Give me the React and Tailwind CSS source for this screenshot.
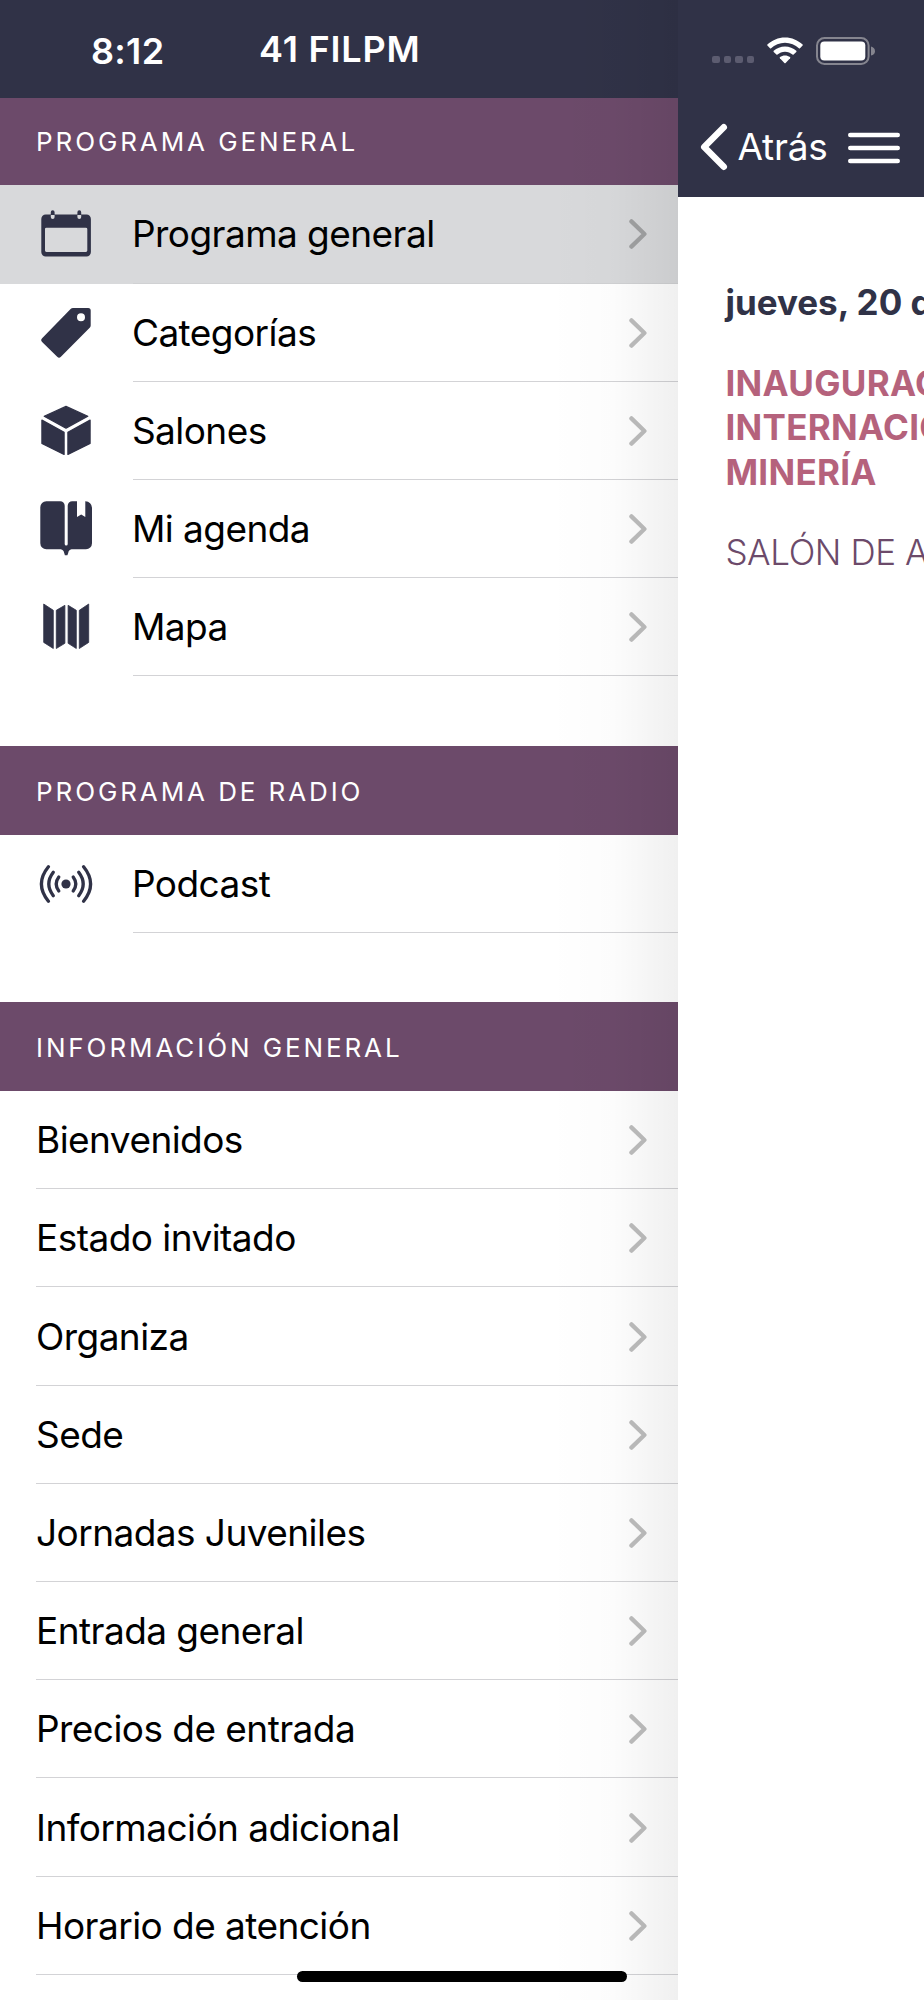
import React from 'react';
import clsx from 'clsx';

const CalendarIcon = () => (
  <path
    fillRule="evenodd"
    d="M10.8 6.5V4.2a1.9 1.9 0 0 1 3.8 0V6.5H37.4V4.2a1.9 1.9 0 0 1 3.8 0V6.5H46.5a4.4 4.4 0 0 1 4.4 4.4V44.1a4.4 4.4 0 0 1-4.4 4.4H5.7a4.4 4.4 0 0 1-4.4-4.4V10.9a4.4 4.4 0 0 1 4.4-4.4ZM6.4 19.7a1.4 1.4 0 0 0-1.4 1.4V42.6A1.4 1.4 0 0 0 6.4 44H45.9a1.4 1.4 0 0 0 1.4-1.4V21.1a1.4 1.4 0 0 0-1.4-1.4ZM10.8 7V9a1.9 1.9 0 0 0 3.8 0V7ZM37.4 7V9a1.9 1.9 0 0 0 3.8 0V7Z"
  />
);

const TagIcon = () => (
  <path
    fillRule="evenodd"
    d="M33 1H48.2a2.5 2.5 0 0 1 2.5 2.5V18.4a3.4 3.4 0 0 1-1 2.4L20.9 49.7a2.6 2.6 0 0 1-3.7 0L2.1 35a2.6 2.6 0 0 1 0-3.7L30.6 2a3.4 3.4 0 0 1 2.4-1ZM41 6.3a4 4 0 1 0 0 8 4 4 0 0 0 0-8Z"
  />
);

const CubeIcon = () => (
  <g strokeWidth="1.2" strokeLinejoin="round" stroke="currentColor">
    <path d="M26 1.4 47.8 11.2 26 23.1 4.2 11.2Z" />
    <path d="M1.9 15.1 24.1 27.3V49.4L1.9 38.4Z" />
    <path d="M50.1 15.1 27.9 27.3V49.4L50.1 38.4Z" />
  </g>
);

const AgendaIcon = () => (
  <path d="M6.3-1.7H20.2A4.5 4.5 0 0 1 24.7 2.8V41a1.5 1.5 0 0 0 3 0V2.8A4.5 4.5 0 0 1 32.2-1.7H37V14L41.2 11.4 45.3 14V-1.7A6.5 6.5 0 0 1 52 5V40.3A6 6 0 0 1 46 46.3H31.5Q28.6 46.8 28.2 50L27.4 52.3H24.9L24.2 50Q23.6 46.8 20.8 46.3H6.3A6 6 0 0 1 .3 40.3V4.3A6 6 0 0 1 6.3-1.7Z" />
);

const MapIcon = () => (
  <g strokeWidth="0.8" strokeLinejoin="round" stroke="currentColor">
    <path d="M3.7 3 13.3 9.3V47.5L3.7 41.4Z" />
    <path d="M16.3 9.3 24.9 4.3V42.3L16.3 47.5Z" />
    <path d="M28.1 4.3 36.3 9.3V47.5L28.1 42.3Z" />
    <path d="M39.3 9.3 48.7 3V41.4L39.3 47.5Z" />
  </g>
);

const PodcastIcon = () => (
  <>
    <circle cx="26" cy="26" r="4.6" />
    <g fill="none" stroke="currentColor" strokeWidth="3.3" strokeLinecap="round">
      <path d="M18.8 19Q13.6 26 18.8 33M33.2 19Q38.4 26 33.2 33" />
      <path d="M13.3 14.3Q4.3 26 13.3 37.7M38.7 14.3Q47.7 26 38.7 37.7" />
      <path d="M8.4 8.8Q-5.6 26 8.4 43.2M43.6 8.8Q57.6 26 43.6 43.2" />
    </g>
  </>
);

const sections = [
  {
    title: 'PROGRAMA GENERAL',
    items: [
      { label: 'Programa general', icon: CalendarIcon, active: true },
      { label: 'Categorías', icon: TagIcon },
      { label: 'Salones', icon: CubeIcon },
      { label: 'Mi agenda', icon: AgendaIcon },
      { label: 'Mapa', icon: MapIcon },
    ],
  },
  {
    title: 'PROGRAMA DE RADIO',
    items: [{ label: 'Podcast', icon: PodcastIcon, noArrow: true }],
  },
  {
    title: 'INFORMACIÓN GENERAL',
    items: [
      { label: 'Bienvenidos' },
      { label: 'Estado invitado' },
      { label: 'Organiza' },
      { label: 'Sede' },
      { label: 'Jornadas Juveniles' },
      { label: 'Entrada general' },
      { label: 'Precios de entrada' },
      { label: 'Información adicional' },
      { label: 'Horario de atención' },
    ],
  },
];

const MenuItem = ({ item }) => {
  const Icon = item.icon;
  return (
    <li className={clsx('flex h-[98.2px]', Icon ? 'pl-[38px]' : 'pl-9', item.active && 'bg-[#d8d9db]')}>
      {Icon && (
        <svg viewBox="-2 -2 56 56" className="mr-[38.5px] h-14 w-14 shrink-0 self-center text-[#303247]" fill="currentColor">
          <Icon />
        </svg>
      )}
      <div className={clsx('flex flex-1 items-center justify-between border-b pr-[31px]', item.active ? 'border-[#d0d1d3]' : 'border-[#d3d3d6]')}>
        <span className={clsx('whitespace-nowrap text-[37px] leading-none tracking-[-0.55px] text-black', Icon && '-ml-[0.6px]')}>{item.label}</span>
        {!item.noArrow && (
          <svg viewBox="0 0 18 30" className="mt-px h-[30px] w-[18px]" fill="none" stroke="#000" strokeOpacity="0.26" strokeWidth="4.3" strokeLinecap="round" strokeLinejoin="round">
            <path d="M2.4 2.4 15.4 15 2.4 27.6" />
          </svg>
        )}
      </div>
    </li>
  );
};

const MenuSection = ({ section, first }) => (
  <section className={clsx(!first && 'mt-[69.3px]')}>
    <h2 className={clsx('flex items-center bg-[#6c4a6a] pl-9 text-[26px] leading-none tracking-[2.9px] text-white', first ? 'h-[87.4px]' : 'h-[89px] pt-[3px]')}>
      {section.title}
    </h2>
    <ul>
      {section.items.map((item) => (
        <MenuItem key={item.label} item={item} />
      ))}
    </ul>
  </section>
);

const Drawer = () => (
  <aside className="relative h-full w-[678.4px] shrink-0 overflow-hidden bg-white">
    <header className="flex h-[98px] items-center bg-[#303247] pl-[91px] font-semibold leading-none text-white">
      <span className="mt-[3px] w-[168px] text-[36px] tracking-[0.3px]">8:12</span>
      <h1 className="text-[36px] tracking-[0.8px]">41 FILPM</h1>
    </header>
    <nav>
      {sections.map((section, i) => (
        <MenuSection key={section.title} section={section} first={i === 0} />
      ))}
    </nav>
    {/* sombra del panel principal */}
    <div className="pointer-events-none absolute inset-y-0 right-0 w-[130px] bg-linear-to-r from-black/0 via-black/[0.012] to-black/[0.06]" />
  </aside>
);

const StatusIcons = () => (
  <div className="flex h-[98px] items-center pl-[34px]">
    <div className="mt-[21px] flex gap-[4px]">
      {[0, 1, 2, 3].map((n) => (
        <span key={n} className="h-[7.5px] w-[7.5px] rounded-[2px] bg-[#5c5c70]" />
      ))}
    </div>
    <svg viewBox="0 0 36 27" className="ml-[12.6px] mt-[3px] h-[27px] w-9" fill="#fff">
      <path d="M18 0.4C24.8 0.4 31 3.1 35.6 7.5Q36.1 8 35.6 8.6L33 11.2Q32.5 11.7 31.9 11.2C28.3 7.8 23.4 5.7 18 5.7S7.7 7.8 4.1 11.2Q3.5 11.7 3 11.2L.4 8.6Q-.1 8 .4 7.5C5 3.1 11.2.4 18 .4Z" />
      <path d="M18 9.4C22.3 9.4 26.3 11.1 29.3 13.8Q29.8 14.3 29.3 14.9L26.6 17.6Q26.1 18.1 25.5 17.6C23.5 15.8 20.9 14.7 18 14.7S12.5 15.8 10.5 17.6Q9.9 18.1 9.4 17.6L6.7 14.9Q6.2 14.3 6.7 13.8C9.7 11.1 13.7 9.4 18 9.4Z" />
      <path d="M18 18.4C19.9 18.4 21.6 19 23 20.1Q23.6 20.6 23.1 21.2L18.6 25.9Q18 26.4 17.4 25.9L12.9 21.2Q12.4 20.6 13 20.1C14.4 19 16.1 18.4 18 18.4Z" />
    </svg>
    <svg viewBox="0 0 60 28" className="ml-[13.5px] mt-[3px] h-7 w-[60px]">
      <rect x="1" y="1" width="51.6" height="26" rx="7.5" fill="none" stroke="#85858f" strokeWidth="2" />
      <rect x="4.3" y="4.6" width="45" height="19" rx="4" fill="#fff" />
      <path d="M55 9.6Q59 11 59 14.2T55 18.6Z" fill="#85858f" />
    </svg>
  </div>
);

const EventScreen = () => (
  <main className="h-full min-w-0 flex-1 overflow-hidden bg-white">
    <header className="h-[196.5px] bg-[#303247]">
      <StatusIcons />
      <div className="flex h-[97px] items-center pl-[21.5px] text-white">
        <svg viewBox="0 0 28 48" className="h-12 w-7 shrink-0" fill="none" stroke="currentColor" strokeWidth="6.4" strokeLinecap="round" strokeLinejoin="round">
          <path d="M23.8 4.2 4.2 24 23.8 43.8" />
        </svg>
        <span className="ml-[9.5px] w-[109.5px] text-[37px] leading-none tracking-[-0.2px]">Atrás</span>
        <svg viewBox="0 0 54 32" className="mt-[3px] h-8 w-[54px] shrink-0" stroke="currentColor" strokeWidth="4.6" strokeLinecap="round">
          <path d="M3.3 3h47.4M3.3 16h47.4M3.3 29h47.4" />
        </svg>
      </div>
    </header>
    <article className="whitespace-nowrap pl-[47px] pt-[83px] text-[35px] leading-[44.6px]">
      <p className="font-bold text-[#303247]">jueves, 20 de febrero</p>
      <h2 className="mt-[36.5px] font-bold tracking-[0.3px] text-[#b5627c]">
        INAUGURACIÓN
        <br />
        INTERNACIONAL
        <br />
        MINERÍA
      </h2>
      <p className="mt-9 font-[350] tracking-[-0.4px] text-[#6c4a6a]">SALÓN DE ACTOS</p>
    </article>
  </main>
);

const App = () => (
  <div className="relative flex h-[2000px] w-[924px] overflow-hidden bg-white font-['Inter','Liberation_Sans',sans-serif]">
    <Drawer />
    <EventScreen />
    <div className="absolute left-[297px] top-[1971px] h-[11px] w-[330px] rounded-full bg-black" />
  </div>
);

export default App;
